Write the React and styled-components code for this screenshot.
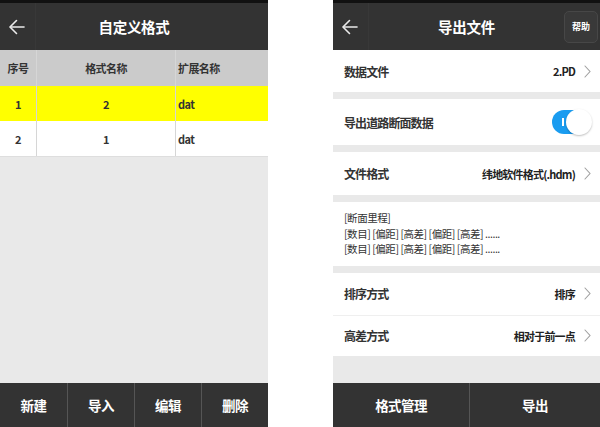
import React from "react";
import styled, { createGlobalStyle } from "styled-components";

const colors = {
  bar: "#333333",
  status: "#111111",
  page: "#e9e9e9",
  text: "#333333",
  head: "#cbcbcb",
  line: "#d6d6d6",
  blue: "#1a9cf0",
};

const GlobalStyle = createGlobalStyle`
  html, body {
    margin: 0;
    padding: 0;
    background: #ffffff;
  }
  body {
    font-family: "Noto Sans CJK SC", "Noto Sans", "Liberation Sans", sans-serif;
  }
`;

const Screen = styled.div`
  width: 600px;
  height: 427px;
  display: flex;
  justify-content: space-between;
  overflow: hidden;
`;

const Panel = styled.div`
  width: ${(p) => p.$width}px;
  height: 427px;
  display: flex;
  flex-direction: column;
  background: ${colors.page};
`;

const StatusStrip = styled.div`
  height: 3px;
  background: ${colors.status};
`;

const Header = styled.div`
  height: 47px;
  background: ${colors.bar};
  display: grid;
  grid-template-columns: 36px 1fr 36px;
  align-items: center;
  color: #fff;
`;

const BackButton = styled.div`
  height: 100%;
  display: flex;
  align-items: center;
  justify-content: center;
  border-right: 1px solid #383838;
  box-sizing: border-box;

  svg {
    width: 18px;
    height: 18px;
    margin-left: -2px;
  }
`;

const Title = styled.div`
  text-align: center;
  font-size: 14.5px;
  font-weight: 700;
  letter-spacing: -0.3px;
`;

const HelpButton = styled.div`
  justify-self: end;
  margin-right: 2px;
  width: 34px;
  height: 32px;
  box-sizing: border-box;
  border: 1px solid #474747;
  border-radius: 5px;
  background: #393939;
  display: flex;
  align-items: center;
  justify-content: center;
  font-size: 9px;
  font-weight: 700;
`;

const Table = styled.div`
  display: grid;
  grid-template-columns: 36px 139px 1fr;
  border-bottom: 1px solid #dedede;
`;

const Cell = styled.div`
  height: ${(p) => (p.$head ? 36 : 35)}px;
  display: flex;
  align-items: center;
  justify-content: ${(p) => (p.$left ? "flex-start" : "center")};
  padding-left: ${(p) => (p.$left ? 2 : 0)}px;
  background: ${(p) => (p.$head ? colors.head : p.$active ? "#ffff00" : "#ffffff")};
  border-left: ${(p) => (p.$first ? "none" : `1px solid ${colors.line}`)};
  font-size: 11px;
  font-weight: 700;
  letter-spacing: -0.6px;
  color: ${colors.text};
  box-sizing: border-box;
`;

const Fill = styled.div`
  flex: 1;
`;

const Footer = styled.div`
  height: 44px;
  background: ${colors.bar};
  display: grid;
  grid-template-columns: ${(p) => p.$cols};
`;

const FooterButton = styled.div`
  display: flex;
  align-items: center;
  justify-content: center;
  color: #fff;
  font-size: 13.5px;
  font-weight: 700;
  letter-spacing: -0.6px;
  border-left: ${(p) => (p.$first ? "none" : "1px solid #555")};
`;

const Group = styled.div`
  background: #fff;
  margin-bottom: 7px;
`;

const Row = styled.div`
  height: ${(p) => p.$h}px;
  display: flex;
  align-items: center;
  padding: 0 8px 0 11px;
  border-top: ${(p) => (p.$divided ? "1px solid #efefef" : "none")};
  box-sizing: border-box;
`;

const Label = styled.div`
  flex: 1;
  font-size: 12px;
  font-weight: 700;
  letter-spacing: -0.9px;
  color: ${colors.text};
`;

const Value = styled.div`
  font-size: 11px;
  font-weight: 700;
  letter-spacing: -0.8px;
  color: #222;
`;

const Chevron = styled.svg`
  width: 7px;
  height: 13px;
  margin-left: 9px;
  margin-right: 1px;
`;

const Toggle = styled.div`
  position: relative;
  width: 39px;
  height: 24px;
  margin-right: 1px;
  border-radius: 12px;
  background: ${colors.blue};

  &::before {
    content: "";
    position: absolute;
    left: 10px;
    top: 8px;
    width: 2px;
    height: 8px;
    background: #fff;
  }

  &::after {
    content: "";
    position: absolute;
    right: -1px;
    top: -1px;
    width: 26px;
    height: 26px;
    border-radius: 50%;
    background: #fff;
    box-shadow: 0 1px 2px rgba(0, 0, 0, 0.25);
  }
`;

const Sample = styled.div`
  padding: 8px 11px 9px;
  font-size: 10.5px;
  line-height: 15.5px;
  letter-spacing: -0.45px;
  color: ${colors.text};
`;

const Arrow = () => (
  <svg viewBox="0 0 18 18" fill="none" stroke="#eaeaea" strokeWidth="1.6" strokeLinecap="round" strokeLinejoin="round">
    <path d="M16 9H2.5" />
    <path d="M8.5 2.5L2 9l6.5 6.5" />
  </svg>
);

const More = () => (
  <Chevron viewBox="0 0 7 13" fill="none" stroke="#a0a0a0" strokeWidth="1.1" strokeLinecap="round">
    <path d="M1 1l5 5.5L1 12" />
  </Chevron>
);

const rows = [
  { no: "1", name: "2", ext: "dat", active: true },
  { no: "2", name: "1", ext: "dat" },
];

export default function App() {
  return (
    <>
      <GlobalStyle />
      <Screen>
        <Panel $width={268}>
          <StatusStrip />
          <Header>
            <BackButton>
              <Arrow />
            </BackButton>
            <Title>自定义格式</Title>
            <span />
          </Header>
          <Table>
            <Cell $head $first>序号</Cell>
            <Cell $head>格式名称</Cell>
            <Cell $head $left>扩展名称</Cell>
            {rows.map((r) => (
              <React.Fragment key={r.no}>
                <Cell $first $active={r.active}>{r.no}</Cell>
                <Cell $active={r.active}>{r.name}</Cell>
                <Cell $left $active={r.active}>{r.ext}</Cell>
              </React.Fragment>
            ))}
          </Table>
          <Fill />
          <Footer $cols="67px 67px 67px 1fr">
            {["新建", "导入", "编辑", "删除"].map((t, i) => (
              <FooterButton key={t} $first={i === 0}>{t}</FooterButton>
            ))}
          </Footer>
        </Panel>

        <Panel $width={267}>
          <StatusStrip />
          <Header>
            <BackButton>
              <Arrow />
            </BackButton>
            <Title>导出文件</Title>
            <HelpButton>帮助</HelpButton>
          </Header>
          <Group>
            <Row $h={42}>
              <Label>数据文件</Label>
              <Value>2.PD</Value>
              <More />
            </Row>
          </Group>
          <Group>
            <Row $h={46}>
              <Label>导出道路断面数据</Label>
              <Toggle />
            </Row>
          </Group>
          <Group>
            <Row $h={43}>
              <Label>文件格式</Label>
              <Value>纬地软件格式(.hdm)</Value>
              <More />
            </Row>
          </Group>
          <Group>
            <Sample>
              [断面里程]
              <br />
              [数目] [偏距] [高差] [偏距] [高差] ......
              <br />
              [数目] [偏距] [高差] [偏距] [高差] ......
            </Sample>
          </Group>
          <Group>
            <Row $h={42}>
              <Label>排序方式</Label>
              <Value>排序</Value>
              <More />
            </Row>
            <Row $h={41} $divided>
              <Label>高差方式</Label>
              <Value>相对于前一点</Value>
              <More />
            </Row>
          </Group>
          <Fill />
          <Footer $cols="136px 1fr">
            <FooterButton $first>格式管理</FooterButton>
            <FooterButton>导出</FooterButton>
          </Footer>
        </Panel>
      </Screen>
    </>
  );
}
